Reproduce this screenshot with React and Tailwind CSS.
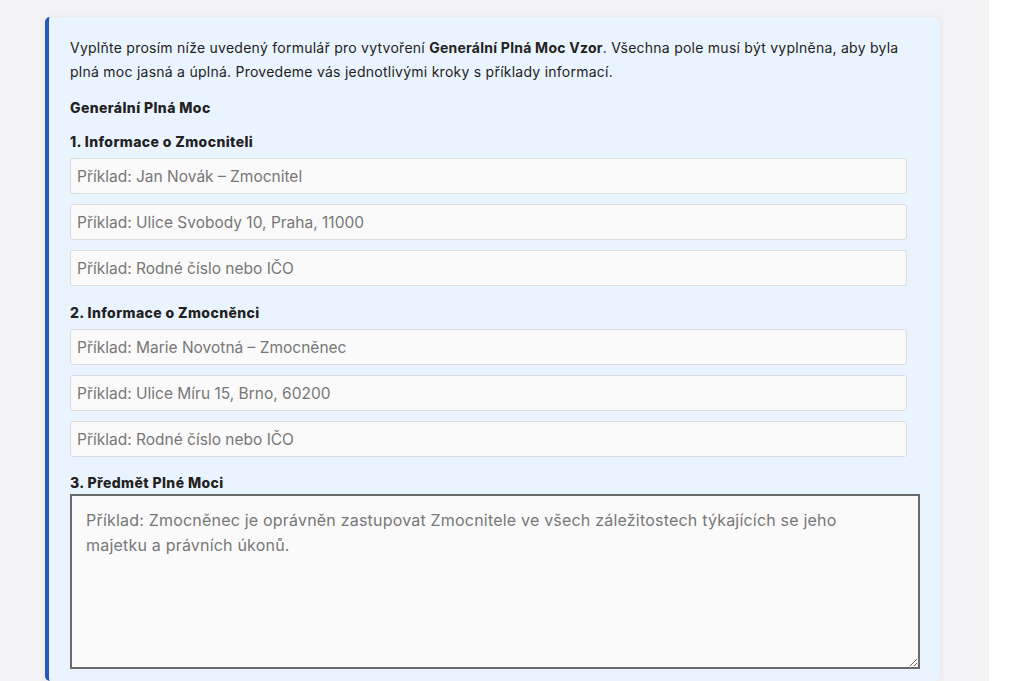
const fields1 = [
  "Příklad: Jan Novák – Zmocnitel",
  "Příklad: Ulice Svobody 10, Praha, 11000",
  "Příklad: Rodné číslo nebo IČO",
];

const fields2 = [
  "Příklad: Marie Novotná – Zmocněnec",
  "Příklad: Ulice Míru 15, Brno, 60200",
  "Příklad: Rodné číslo nebo IČO",
];

const Field = ({ placeholder }) => (
  <input
    type="text"
    placeholder={placeholder}
    className="block w-[837px] h-[36px] rounded-[3px] border border-[#dcdcdc] bg-[#fafafa] px-[6px] text-[15.5px] text-[#333] placeholder:text-[#777] outline-none"
  />
);

export default function App() {
  return (
    <div className="flex min-h-[681px] bg-white font-['Inter',sans-serif] text-[#222]">
      <div className="w-[989px] bg-[#f3f3f5] pt-[17px] pl-[45px]">
        <div className="w-[895px] rounded-[5px] border-l-4 border-[#2659b8] bg-[#eaf4fe] pl-[21px] pr-[33px] pt-[19px] pb-[12px] shadow-[0_0_8px_rgba(0,0,0,0.06)]">
          <p className="text-[14px] leading-[24px] tracking-[0.25px]">
            Vyplňte prosím níže uvedený formulář pro vytvoření{" "}
            <strong className="font-bold">Generální Plná Moc Vzor</strong>.
            Všechna pole musí být vyplněna, aby byla
            <br />
            plná moc jasná a úplná. Provedeme vás jednotlivými kroky s příklady
            informací.
          </p>
          <h3 className="mt-[14px] text-[14px] font-extrabold leading-[20px] tracking-[0.4px]">
            Generální Plná Moc
          </h3>
          <h4 className="mt-[14px] text-[14px] font-extrabold leading-[20px] tracking-[0.4px]">
            1. Informace o Zmocniteli
          </h4>
          <div className="mt-[6px] flex flex-col gap-[10px]">
            {fields1.map((f, i) => (
              <Field key={i} placeholder={f} />
            ))}
          </div>
          <h4 className="mt-[17px] text-[14px] font-extrabold leading-[20px] tracking-[0.4px]">
            2. Informace o Zmocněnci
          </h4>
          <div className="mt-[6px] flex flex-col gap-[10px]">
            {fields2.map((f, i) => (
              <Field key={i} placeholder={f} />
            ))}
          </div>
          <h4 className="mt-[16px] text-[14px] font-extrabold leading-[20px] tracking-[0.4px]">
            3. Předmět Plné Moci
          </h4>
          <textarea
            placeholder="Příklad: Zmocněnec je oprávněn zastupovat Zmocnitele ve všech záležitostech týkajících se jeho majetku a právních úkonů."
            className="mt-[1px] block h-[175px] w-[850px] border-2 border-[#6b6b6b] bg-[#fafafa] pl-[14px] pr-[40px] pt-[12px] pb-[8px] text-[16px] leading-[25px] tracking-[0.2px] text-[#333] placeholder:text-[#777] outline-none"
          />
        </div>
      </div>
    </div>
  );
}
